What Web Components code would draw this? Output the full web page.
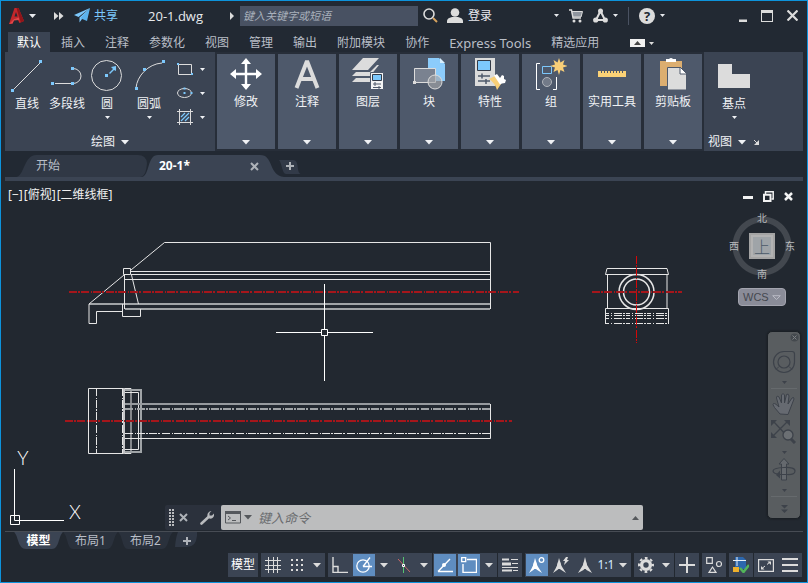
<!DOCTYPE html>
<html lang="zh-CN">
<head>
<meta charset="utf-8">
<title>20-1.dwg</title>
<style>
  html { height: 100%; }
  body {
    margin: 0; min-height: 100%; display: flex; flex-direction: column; overflow: hidden;
    font: 12px/16px "Noto Sans", "Noto Sans CJK SC", sans-serif; color: #e4e6ea;
    background: #222830;
    --bar: #222933; --panel: #3b4453; --tile: #4e596b; --edge: #0d93dc;
    --icon: #dcdcdc; --blue: #7cc8fc; --active: #5f8dc0;
  }
  cad-window { flex: 1; }
</style>
</head>
<body>
<cad-window>
  <title-bar slot="top" file="20-1.dwg"></title-bar>
  <ribbon-tabs slot="top">
    <ribbon-tab active>默认</ribbon-tab>
    <ribbon-tab>插入</ribbon-tab>
    <ribbon-tab>注释</ribbon-tab>
    <ribbon-tab>参数化</ribbon-tab>
    <ribbon-tab>视图</ribbon-tab>
    <ribbon-tab>管理</ribbon-tab>
    <ribbon-tab>输出</ribbon-tab>
    <ribbon-tab>附加模块</ribbon-tab>
    <ribbon-tab>协作</ribbon-tab>
    <ribbon-tab latin>Express Tools</ribbon-tab>
    <ribbon-tab>精选应用</ribbon-tab>
  </ribbon-tabs>
  <ribbon-bar slot="top">
    <draw-panel slot="start"></draw-panel>
    <tool-panel icon="move">修改</tool-panel>
    <tool-panel icon="annotate">注释</tool-panel>
    <tool-panel icon="layers">图层</tool-panel>
    <tool-panel icon="block">块</tool-panel>
    <tool-panel icon="props">特性</tool-panel>
    <tool-panel icon="group">组</tool-panel>
    <tool-panel icon="ruler">实用工具</tool-panel>
    <tool-panel icon="clipboard">剪贴板</tool-panel>
    <view-panel slot="end"></view-panel>
  </ribbon-bar>
  <file-tabs slot="top"></file-tabs>
  <model-space>
    <view-cube slot="cube"></view-cube>
    <nav-bar slot="nav"></nav-bar>
    <command-line slot="command"></command-line>
  </model-space>
  <layout-tabs slot="bottom"></layout-tabs>
  <status-bar slot="bottom"></status-bar>
</cad-window>

<script>
const RESET = `
  :host, *, *::before, *::after { box-sizing: border-box; }
  button, input { font: inherit; color: inherit; background: none; border: 0; padding: 0; margin: 0; }
  button { cursor: pointer; white-space: nowrap; }
  svg { display: block; }
`;
function define(name, html, setup) {
  const tpl = document.createElement('template');
  tpl.innerHTML = html.replace('<style>', '<style>' + RESET);
  customElements.define(name, class extends HTMLElement {
    constructor() {
      super();
      this.attachShadow({ mode: 'open' }).append(tpl.content.cloneNode(true));
    }
    connectedCallback() { if (setup) setup.call(this, this.shadowRoot); }
  });
}
function addIcon(host, where) {
  const name = host.getAttribute('icon');
  const button = host.shadowRoot.querySelector('button');
  if (!name || button.querySelector('.main')) return;
  const icon = document.createElement('ui-icon');
  icon.className = 'main';
  icon.setAttribute('name', name);
  button[where](icon);
}

/* name: [width, height, markup] */
const ICONS = {
  caret: [7, 4, '<path d="M0 0h7L3.5 4z" fill="currentColor"/>'],
  caretS: [5, 3, '<path d="M0 0h5L2.5 3z" fill="currentColor"/>'],
  caretB: [8, 5, '<path d="M0 0h8L4 4.500z" fill="currentColor"/>'],
  up: [7, 4, '<path d="M0 4h7L3.500 0z" fill="currentColor"/>'],
  right: [4, 8, '<path d="M0 0v8l4-4z" fill="#dcdcdc"/>'],
  logo: [15, 16, '<path d="M5.500 0H9.500L15 13L10.500 15L8.200 10.500L5 11L3.600 15.500L0 16z" fill="#c3272b"/><path d="M7 4L5.500 8.500H8.500z" fill="#222933"/><path d="M9.500 0L15 13L11.800 14.400L7.500 0z" fill="#8f1519"/><path d="M0 16L5 11L10 9.500V12L5 12.500L3.600 15.500z" fill="#e0474a"/>'],
  more: [10, 8, '<path d="M0 0v8l4.500-4zM5 0v8l4.500-4z" fill="#dcdcdc"/>'],
  plane: [16, 15, '<path d="M16 0L0 7L4.500 9zM16 0L5.500 9.500V14.500L8 11z" fill="#7cc8fc"/><path d="M16 0L6.500 10.200L13 13z" fill="#5bb3ee"/>'],
  search: [15, 15, '<circle cx="6" cy="6" r="5" fill="none" stroke="#dcdcdc" stroke-width="1.600"/><path d="M10 10l4 4" stroke="#d7a35e" stroke-width="2"/>'],
  user: [16, 15, '<circle cx="8" cy="4.500" r="4.300" fill="#dcdcdc"/><path d="M0 15v-2q0-3 5-4h6q5 1 5 4v2z" fill="#dcdcdc"/>'],
  cart: [14, 14, '<path d="M0 1h2.500L4 9h8" fill="none" stroke="#dcdcdc" stroke-width="1.400"/><path d="M3 2.500h10.500L12 8H4z" fill="#8f959e" stroke="#dcdcdc"/><circle cx="5" cy="12" r="1.500" fill="#dcdcdc"/><circle cx="11" cy="12" r="1.500" fill="#dcdcdc"/>'],
  share: [15, 15, '<path d="M7.500 3L3 12H12z" fill="none" stroke="#dcdcdc" stroke-width="2"/><circle cx="7.500" cy="3" r="2.500" fill="#dcdcdc"/><circle cx="2.700" cy="12" r="2.600" fill="#dcdcdc"/><circle cx="12.300" cy="12" r="2.600" fill="#dcdcdc"/>'],
  min: [8, 12, '<path d="M0 9.500h8v2.500h-8z" fill="#dcdcdc"/>'],
  max: [12, 12, '<path d="M0 0h12v12H0zM1 3v8h10V3z" fill="#dcdcdc" fill-rule="evenodd"/>'],
  close: [11, 11, '<path d="M.5.5l10 10M10.500.5l-10 10" stroke="#dcdcdc" stroke-width="2.200"/>'],
  line: [32, 32, '<path d="M2 30L29 3" stroke="#dcdcdc"/><path d="M0 29h3v3H0zM28 0h3v3h-3z" fill="#7cc8fc"/>'],
  pline: [32, 32, '<path d="M4 23.500h16M22 8.500a8 7.500 0 0 1 0 15" fill="none" stroke="#dcdcdc"/><path d="M0 22h3v3H0zM20 22h3v3h-3zM20 7h3v3h-3z" fill="#7cc8fc"/>'],
  circle: [32, 32, '<circle cx="15.500" cy="15.500" r="15" fill="none" stroke="#dcdcdc"/><path d="M14 14h3v3h-3zM25 6v5l-2-1-4 4-1-1 4-4-2-2z" fill="#7cc8fc"/>'],
  arc: [32, 32, '<path d="M3 28C4 16 15 4 29 3" fill="none" stroke="#dcdcdc"/><path d="M2 27h3v3H2zM10 8h3v3h-3zM29 0h3v3h-3z" fill="#7cc8fc"/>'],
  rect: [16, 16, '<path d="M1.500 3.500h13v10h-13z" fill="none" stroke="#dcdcdc"/><path d="M0 2h2v2H0zM14 12h2v2h-2z" fill="#7cc8fc"/>'],
  ellipse: [16, 16, '<ellipse cx="7.500" cy="8" rx="7" ry="4.500" fill="none" stroke="#dcdcdc"/><path d="M6.500 2.500h2v2h-2zM6.500 7h2v2h-2zM13.500 7h2v2h-2z" fill="#7cc8fc"/>'],
  hatch: [16, 16, '<path d="M0 2.500h16M0 13.500h16M2.500 0v16M13.500 0v16" stroke="#dcdcdc"/><path d="M4 8l4-4M4 12l8-8M8 12l4-4" stroke="#7cc8fc" stroke-width="1.200"/>'],
  move: [32, 32, '<path d="M16 0l5 6h-3.800v8.800H26V11l6 5-6 5v-3.800h-8.800V26H21l-5 6-5-6h3.800v-8.800H6V21l-6-5 6-5v3.800h8.800V6H11z" fill="#fff"/>'],
  annotate: [32, 32, '<path d="M5.500 30L16 3L26.500 30M9 21H23" fill="none" stroke="#dcdcdc" stroke-width="4" stroke-linejoin="bevel"/>'],
  layers: [32, 32, '<path d="M11 0h16L16 12H0zM4 14h14l7-7h2l-9 11H0zM4 20h14l3-3v4l-3 3H0z" fill="#dcdcdc"/><path d="M18.500 14.500h13v17h-13z" fill="#f4f4f4" stroke="#4e596b"/><path d="M20.500 16.500h9v6h-9z" fill="#7cc8fc" stroke="#333b48"/><path d="M21 26h8M23 24v4M21 29.500h8M27 28v3" stroke="#4e596b"/>'],
  block: [32, 32, '<path d="M15 0h11l6 6v17H15z" fill="#8cccfb"/><path d="M27 0v5h5z" fill="#d8effd"/><path d="M1.500 10.500h21v14h-21z" fill="#7a8290" stroke="#dcdcdc"/><path d="M0 23h3v3H0z" fill="#dcdcdc"/><circle cx="22" cy="24" r="7" fill="#a6a8ab" fill-opacity=".65" stroke="#dcdcdc"/>'],
  props: [32, 32, '<path d="M1 0h20v28H1z" fill="#dcdcdc"/><path d="M3.500 2.500h13v10h-13z" fill="#7cc8fc" stroke="#333b48"/><path d="M4 18h12M8 15.500v5M4 23h12M12 21v5" stroke="#4e596b" stroke-width="1.500"/><path d="M15 21l6-3 6 8-4 6q-2-7-8-11z" fill="#f8cf78"/><path d="M20 17.500l3-1.500 3 4 2-3 2 1v3l2 1-1 3-3 .5-2 1z" fill="#fff"/>'],
  group: [32, 32, '<path d="M5 5.500H1.500v26H5M18 31.500h3.500V19" fill="none" stroke="#fff"/><path d="M7.500 8.500h9v7h-9z" fill="none" stroke="#7cc8fc"/><circle cx="12" cy="24" r="4.500" fill="#727a88" stroke="#b0b4ba"/><path d="M24 0l1.500 4.500 4-2.500-1.500 4.500 5 1.500-5 1.500 1.500 4.500-4-2-1.500 5-1.500-5-4 2 1.500-4.500-5-1.500 5-1.500-1.500-4.500 4 2.500z" fill="#f8cf78"/>'],
  ruler: [32, 32, '<path d="M2 13h28v6H2z" fill="#fbd276"/><path d="M5.500 12v3M8.500 12v3M11.500 12v3M14.500 12v3M17.500 12v3M20.500 12v3M23.500 12v3M26.500 12v3" stroke="#4e596b"/>'],
  clipboard: [32, 32, '<path d="M3 3h22v25H3z" fill="#dcae70"/><path d="M9 1h3q2-2 4 0h3v3H9z" fill="#fff"/><path d="M10.500 9.500h13l6 6V32h-19z" fill="#dcdcdc" stroke="#4e596b"/><path d="M23 9v7h7z" fill="#fff" stroke="#4e596b"/>'],
  base: [32, 24, '<path d="M0 0h14v10h18v14H0z" fill="#dcdcdc"/>'],
  launch: [5, 5, '<path d="M0 0l3 3" stroke="#dcdcdc"/><path d="M5 0v5H0z" fill="#dcdcdc"/>'],
  x: [9, 9, '<path d="M1 1l7 7M8 1l-7 7" stroke="#aeb2b8" stroke-width="2"/>'],
  plus: [8, 8, '<path d="M0 4h8M4 0v8" stroke="#aeb2b8" stroke-width="2"/>'],
  docmin: [10, 10, '<path d="M0 4h10v3H0z" fill="#f2f2f2"/>'],
  docmax: [11, 11, '<path d="M2.500 3V.8H10.200V8H8.500" fill="none" stroke="#f2f2f2" stroke-width="1.500"/><path d="M1 3.800h6.500V10H1z" fill="none" stroke="#f2f2f2" stroke-width="2"/>'],
  docx: [9, 9, '<path d="M1 1l7 7M8 1l-7 7" stroke="#f2f2f2" stroke-width="2.500"/>'],
  grip: [5, 18, '<path d="M1 0v18M4 0v18" stroke="#b9bbbe" stroke-width="2" stroke-dasharray="2 1"/>'],
  wrench: [14, 14, '<path d="M1.500 12.500L8.500 6" stroke="#b9bbbe" stroke-width="2.600" stroke-linecap="round"/><path d="M11.500 0L9.500 2v2.500H12L14 2.500q.5 3-1.500 4.500t-4 0Q6.500 5 8 2 9.500 0 11.500 0z" fill="#b9bbbe"/>'],
  prompt: [16, 13, '<path d="M.5.5h15v11.500H.5z" fill="none" stroke="#55585c"/><path d="M0 0h16v3H0z" fill="#55585c"/><path d="M3 5l2.500 2L3 9M7 9.500h4" fill="none" stroke="#55585c"/>'],
  grid: [16, 16, '<path d="M3.500 0v16M8.500 0v16M12.500 0v16M0 3.500h16M0 8.500h16M0 12.500h16" stroke="#dcdcdc"/>'],
  snap: [14, 14, '<path d="M1 2h12M1 7h12M1 12h12" stroke="#dcdcdc" stroke-width="2" stroke-dasharray="2 3"/>'],
  ortho: [16, 16, '<path d="M1 0v15.500h15M1 9.500h5v6" fill="none" stroke="#dcdcdc" stroke-width="1.400"/>'],
  polar: [16, 16, '<circle cx="7" cy="9" r="6.200" fill="none" stroke="#fff" stroke-width="1.300"/><path d="M7 9.500h9M7 9.500l7-9" stroke="#fff" stroke-width="1.300"/>'],
  iso: [16, 16, '<path d="M2 2l12 13" stroke="#c96868"/><path d="M7.500 0v16" stroke="#56c271"/><path d="M6.500 7.500h2v2h-2z" fill="#3b4453" stroke="#fff"/>'],
  angle: [16, 16, '<path d="M1 14.500h15M1 14.500L13 2" stroke="#fff" stroke-width="1.400"/><circle cx="7" cy="8" r="2" fill="#fff"/>'],
  osnap: [16, 16, '<path d="M6 2.500h9.500v13H2V7" fill="none" stroke="#fff" stroke-width="1.400"/><path d="M.7.7h4v4h-4z" fill="none" stroke="#fff" stroke-width="1.300"/>'],
  weight: [16, 14, '<path d="M0 .5h7v2H0zM9 1h7v1H9zM0 4.500h9v3H0zM10 5h6v1h-6zM0 9h16v1H0zM0 11.500h10v2H0zM11 12h5v1h-5z" fill="#dcdcdc"/>'],
  annoA: [16, 16, '<path d="M6 1L8.500 9 13 16 7.500 12.500 6 9.500 5 12.500 0 16 4 9z" fill="#fff"/><path d="M5 5h2l2 7H3z" fill="#fff"/><circle cx="12.500" cy="3" r="2.300" fill="none" stroke="#fff" stroke-width="1.300"/>'],
  annoB: [16, 16, '<path d="M6 1L8.500 9 13 16 7.500 12.500 6 11 5 12.500 0 16 4 9z" fill="#dcdcdc"/><path d="M5 5h2l2 7H3z" fill="#dcdcdc"/><path d="M13 0l-3 4h2l-1 4 5-5h-2l1-3z" fill="#dcdcdc"/>'],
  annoC: [16, 16, '<path d="M8 0L10 8 15 16 9.500 13 8 11 6.500 13 1 16 6 8z" fill="#dcdcdc"/><path d="M7 5h2l2 7H5z" fill="#dcdcdc"/>'],
  gear: [16, 16, '<circle cx="8" cy="8" r="4.400" fill="none" stroke="#dcdcdc" stroke-width="3.400"/><circle cx="8" cy="8" r="7" fill="none" stroke="#dcdcdc" stroke-width="2" stroke-dasharray="2.750 2.750" stroke-dashoffset="1.400"/>'],
  add: [16, 16, '<path d="M0 8h16M8 0v16" stroke="#dcdcdc" stroke-width="2"/>'],
  shapes: [16, 16, '<path d="M.7.7h5.600v5.600H.7zM3 15.300h7L6.500 10z" fill="none" stroke="#dcdcdc" stroke-width="1.200"/><circle cx="13" cy="7" r="2.500" fill="none" stroke="#dcdcdc" stroke-width="1.200"/>'],
  perf: [16, 16, '<path d="M2 0h8l3 3v9H2z" fill="#2c67ad"/><path d="M0 3.500h13M4 0v9" stroke="#e8eef5"/><path d="M0 10h6v5H0z" fill="#eeb02c"/><path d="M7 11l3.500 4 5.500-7" fill="none" stroke="#52b45a" stroke-width="2.500"/>'],
  full: [16, 13, '<path d="M.6.6h14.800v11.800H.6z" fill="none" stroke="#dcdcdc" stroke-width="1.200"/><path d="M9 5.500L12 3M4 9.500L7 7" stroke="#dcdcdc"/><path d="M9.500 2.500H13V6zM3 7v3.500h3.500z" fill="#dcdcdc"/>'],
  menu: [16, 14, '<path d="M0 1h16M0 7h16M0 13h16" stroke="#dcdcdc" stroke-width="2"/>'],
  wheel: [24, 24, '<path d="M12 1.500H20Q22.500 1.500 22.500 4V12A10.500 10.500 0 1 1 12 1.500z" fill="none" stroke="#3d424a" stroke-width="1.200"/><circle cx="12" cy="12" r="6" fill="none" stroke="#3d424a" stroke-width="1.200"/><path d="M7 16.500l-3 3M17 16.500l3 3" stroke="#3d424a"/>'],
  hand: [24, 24, '<path d="M8 22L2.500 15.500Q0 12 1.500 11.500T7 15L4.500 6Q4.500 3 7 5l2.500 6L9.500 3Q11 0 12.500 3v8l2-8.500Q16.500 1 17 4l-1 8 4-6q2-1.500 2 1l-3.500 9L16 22.500z" fill="#666a71" stroke="#3d424a"/>'],
  zoom: [26, 24, '<path d="M3 2L16 16M16 2L2 16" stroke="#3d424a" stroke-width="1.300"/><path d="M0 0h6L0 6zM13 0h6v6zM0 18v-6l6 6z" fill="#3d424a"/><circle cx="17" cy="15" r="5" fill="#6b6f73" stroke="#3d424a" stroke-width="1.300"/><path d="M20 19l4 4" stroke="#3d424a" stroke-width="3"/>'],
  orbit: [24, 24, '<path d="M9.500 22V6H7L12 .5 17 6h-2.500V22z" fill="#65696e" stroke="#3d424a"/><path d="M9 16.500Q1 16 1 13t11-3.500T23 13t-8 3.500H6" fill="none" stroke="#3d424a" stroke-width="1.200"/><path d="M8 12.500v8L4 17z" fill="#3d424a"/>'],
  expand: [7, 8, '<path d="M0 0h7L3.500 3.500zM0 4.500h7L3.500 8z" fill="#3d424a"/>'],
  navx: [9, 9, '<circle cx="4.500" cy="4.500" r="4" fill="#44494e"/><path d="M2.500 2.500l4 4M6.500 2.500l-4 4" stroke="#7c8084"/>'],
  wcs: [9, 5, '<path d="M.7.7h7.600L4.500 4.500z" fill="none" stroke="#b9bac4"/>']
};
define('ui-icon', '<style>:host{display:inline-flex;flex:none}</style><div></div>', function (root) {
  const [w, h, markup] = ICONS[this.getAttribute('name')];
  root.querySelector('div').innerHTML = `<svg width="${w}" height="${h}" viewBox="0 0 ${w} ${h}" aria-hidden="true">${markup}</svg>`;
});

define('cad-window', `<style>
  :host { display: flex; flex-direction: column; border: 1px solid var(--edge); background: #222830; min-width: 0; }
  main { flex: 1; display: flex; flex-direction: column; min-height: 0; }
</style>
<slot name="top"></slot><main><slot></slot></main><slot name="bottom"></slot>`);

define('title-bar', `<style>
  :host { display: flex; align-items: center; height: 29px; background: var(--bar); padding: 0 9px 0 8px; color: #e8eaee; }
  button { display: flex; align-items: center; gap: 5px; flex: none; }
  .app { margin-right: 18px; }
  .quick { margin-right: 10px; }
  .share { color: var(--blue); margin-right: 30px; gap: 4px; }
  .name { flex: none; width: 82px; font: 13px/16px "Open Sans", sans-serif; white-space: nowrap; }
  input { width: 178px; min-width: 60px; height: 20px; margin: 0 5px 0 6px; padding: 0 3px; background: #485162; font-style: italic; font-size: 11px; outline: 0; }
  input::placeholder { color: #a9b0bb; opacity: 1; }
  .find { margin-right: 9px; }
  .spacer { flex: 1; }
  .group { display: flex; align-items: center; gap: 10px; margin-right: 74px; }
  hr { width: 1px; height: 18px; margin: 0; border: 0; background: #4a5262; }
  .help b { width: 16px; height: 16px; border-radius: 8px; background: #dcdcdc; color: #222933; font: bold 13px/16px "Open Sans", sans-serif; }
  .win { display: flex; align-items: center; gap: 14px; }
</style>
<button class="app" aria-label="应用程序菜单"><ui-icon name="logo"></ui-icon><ui-icon name="caret"></ui-icon></button>
<button class="quick" aria-label="快速访问"><ui-icon name="more"></ui-icon></button>
<button class="share"><ui-icon name="plane"></ui-icon>共享</button>
<span class="name"></span>
<ui-icon name="right"></ui-icon>
<input type="search" placeholder="键入关键字或短语" aria-label="搜索">
<button class="find" aria-label="搜索"><ui-icon name="search"></ui-icon></button>
<button><ui-icon name="user"></ui-icon>登录</button>
<span class="spacer"></span>
<div class="group">
  <button aria-label="登录选项"><ui-icon name="caretS"></ui-icon></button>
  <button aria-label="应用商店"><ui-icon name="cart"></ui-icon></button>
  <button aria-label="连接"><ui-icon name="share"></ui-icon><ui-icon name="caretS"></ui-icon></button>
  <hr>
  <button class="help" aria-label="帮助"><b>?</b><ui-icon name="caretS"></ui-icon></button>
</div>
<div class="win">
  <button aria-label="最小化"><ui-icon name="min"></ui-icon></button>
  <button aria-label="最大化"><ui-icon name="max"></ui-icon></button>
  <button aria-label="关闭"><ui-icon name="close"></ui-icon></button>
</div>`, function (root) { root.querySelector('.name').textContent = this.getAttribute('file'); });

define('ribbon-tab', `<style>
  :host { display: flex; }
  button { padding: 2px 9px 0; color: #b9bec7; height: 20px; }
  :host([active]) button { background: var(--panel); color: #fff; }
  :host([latin]) button { font-size: 13px; }
</style><button role="tab"><slot></slot></button>`);

define('ribbon-tabs', `<style>
  :host { display: flex; align-items: flex-end; gap: 2px; height: 22px; padding: 0 7px; background: var(--bar); color: #dcdcdc; }
  .fold { display: flex; align-items: center; gap: 4px; height: 18px; margin-left: 20px; }
  .box { display: flex; align-items: center; justify-content: center; width: 15px; height: 8px; background: #f0f0f0; color: #444; }
</style><slot></slot>
<button class="fold" aria-label="最小化功能区"><span class="box"><ui-icon name="up"></ui-icon></span><ui-icon name="caretS"></ui-icon></button>`);

define('ribbon-bar', `<style>
  :host { display: flex; margin: 0 4px; background: var(--panel); height: 99px; }
  .tiles { flex: 0 1 489px; display: flex; gap: 3px; padding: 2px; background: #272e39; min-width: 0; }
</style><slot name="start"></slot><div class="tiles"><slot></slot></div><slot name="end"></slot>`);

define('tool-panel', `<style>
  :host { display: flex; flex: 1 1 58px; background: var(--tile); }
  button { flex: 1; display: flex; flex-direction: column; align-items: center; padding: 4px 0; color: #f0f2f5; }
  .label { margin: 4px 0 auto; }
</style><button><span class="label"><slot></slot></span><ui-icon name="caretB"></ui-icon></button>`, function () { addIcon(this, 'prepend'); });

define('draw-panel', `<style>
  :host { display: flex; flex-direction: column; flex: 0 0 210px; padding: 8px 6px 1px; color: #f0f2f5; }
  .tools { display: grid; grid-template-columns: 32px 36px 32px 40px 34px; gap: 6px; }
  .tools > button { display: flex; flex-direction: column; align-items: center; gap: 4px; }
  .small { display: grid; gap: 8px; align-content: start; padding-top: 1px; }
  .small button { display: flex; align-items: center; justify-content: space-between; padding: 0 4px 0 2px; }
  .foot { display: flex; align-items: center; justify-content: center; gap: 6px; margin-top: auto; }
</style>
<div class="tools">
  <button><ui-icon name="line"></ui-icon><span>直线</span></button>
  <button><ui-icon name="pline"></ui-icon><span>多段线</span></button>
  <button><ui-icon name="circle"></ui-icon><span>圆</span><ui-icon name="caretS"></ui-icon></button>
  <button><ui-icon name="arc"></ui-icon><span>圆弧</span><ui-icon name="caretS"></ui-icon></button>
  <div class="small">
    <button aria-label="矩形"><ui-icon name="rect"></ui-icon><ui-icon name="caretS"></ui-icon></button>
    <button aria-label="椭圆"><ui-icon name="ellipse"></ui-icon><ui-icon name="caretS"></ui-icon></button>
    <button aria-label="图案填充"><ui-icon name="hatch"></ui-icon><ui-icon name="caretS"></ui-icon></button>
  </div>
</div>
<button class="foot">绘图<ui-icon name="caretB"></ui-icon></button>`);

define('view-panel', `<style>
  :host { display: flex; flex-direction: column; flex: 1; padding: 12px 4px 1px; color: #f0f2f5; }
  .base { display: flex; flex-direction: column; align-items: center; gap: 4px; width: 52px; }
  .base span { margin-top: 4px; }
  .foot { display: flex; align-items: center; gap: 6px; margin-top: auto; }
  .foot ui-icon + ui-icon { margin-left: 2px; }
</style>
<button class="base"><ui-icon name="base"></ui-icon><span>基点</span><ui-icon name="caretS"></ui-icon></button>
<button class="foot">视图<ui-icon name="caretB"></ui-icon><ui-icon name="launch"></ui-icon></button>`);

define('file-tabs', `<style>
  :host { display: flex; align-items: stretch; height: 30px; padding: 4px 0 0 11px; background: linear-gradient(var(--panel), var(--panel)) 0 100% / 100% 4px no-repeat, var(--bar); margin: 0 4px; }
  .tab { position: relative; isolation: isolate; display: flex; align-items: center; height: 22px; }
  .tab > svg { position: absolute; inset: 0; width: 100%; height: 100%; z-index: -1; }
  .start { width: 132px; padding-left: 20px; color: #b9bec7; }
  .doc { width: 138px; padding: 0 27px 0 11px; justify-content: space-between; font-weight: bold; color: #fff; }
  .new { width: 23px; justify-content: center; margin-left: -8px; }
  .doc button { display: flex; }
</style>
<div class="tab start"><svg viewBox="0 0 132 22" preserveAspectRatio="none"><path d="M0 22C8 22 8 0 20 0H122Q130 0 131 8Q130 22 124 22z" fill="#303845"/></svg><button>开始</button></div>
<div class="tab doc"><svg viewBox="0 0 138 22" preserveAspectRatio="none" overflow="visible"><path d="M-6 22C2 20 -1 0 10 0H112C126 0 120 20 136 22z" fill="#3b4453"/></svg><button>20-1*</button><button aria-label="关闭"><ui-icon name="x"></ui-icon></button></div>
<button class="tab new" aria-label="新建"><svg viewBox="0 0 23 22" preserveAspectRatio="none"><path d="M1 5H15C22 5 18 18 23 19H8C4 19 4 8 1 5z" fill="#323a48"/></svg><ui-icon name="plus"></ui-icon></button>`);

define('model-space', `<style>
  :host { position: relative; display: block; flex: 1; min-height: 350px; overflow: hidden; background: #222830; }
  .sheet { position: absolute; inset: 0; width: 100%; height: 100%; }
  .label { position: absolute; left: 7px; top: 6px; display: flex; gap: 1px; color: #f0f0f0; }
  .win { position: absolute; right: 14px; top: 10px; display: flex; align-items: center; gap: 10px; }
  .win button { display: flex; }
  ::slotted([slot=cube]) { position: absolute; right: 11px; top: 31px; }
  ::slotted([slot=nav]) { position: absolute; right: 6px; top: 150px; }
  ::slotted([slot=command]) { position: absolute; left: 164px; right: 164px; bottom: 1px; }
</style>
<svg class="sheet" viewBox="1 181 806 350" preserveAspectRatio="xMinYMin" fill="none" stroke="#e6e6e6" role="img" aria-label="图形">
  <g id="side">
    <path d="M131 270L164.500 242.500H490.500V309"/>
    <path d="M131 271.500H490M131 274.500H490M125 279.500H490"/>
    <path d="M89 304H490M125 309H490" stroke="#a0a4a7" stroke-width="2"/>
    <path d="M123.500 268.500h7v6h-7zM124.500 275V309M131.500 275L138.500 304M124 275L89 304V323.500H96.500V311.500H122.500M122.500 304V316.500H140.500V309"/>
  </g>
  <g id="plan">
    <path d="M88.500 388.500H131V453.500H88.500z"/>
    <path d="M124 390H141V452H124" stroke="#a0a4a7" stroke-width="2"/>
    <path d="M125 392.500H138.500V449.500H125"/>
    <path d="M124 388V454" stroke="#c4c5c7" stroke-width="2"/>
    <path d="M96.500 388V454M122.500 388V454" stroke-dasharray="8 2 1 1 8 1 2 1 8 1 2 2"/>
    <path d="M125 404H490" stroke="#969a9e" stroke-width="2"/>
    <path d="M490.500 404V438.500H125"/>
    <path d="M125 409H490" stroke="#a0a4a7" stroke-width="2" stroke-dasharray="8 2 1 1 8 1 2 1 8 1 2 2"/>
    <path d="M125 433.500H490" stroke-dasharray="8 2 1 1 8 1 2 1 8 1 2 2"/>
  </g>
  <g id="front">
    <path d="M607 268.500H667L668.500 274.500H605.500zM607.500 274.500V308.500M667 274.500V308.500M605.500 324V308.500H668.500V324"/>
    <circle cx="636.500" cy="292" r="17.500" stroke-width="1.500"/><circle cx="636.500" cy="292" r="13" stroke-width="1.500"/>
    <path d="M605 313.500H669M605 315.500H669M605 318.500H669M605 323.500H669" stroke-dasharray="4 2 1 2 8 1 2 1"/>
  </g>
  <g id="axes" stroke="#a5161b" stroke-width="2" stroke-dasharray="8 1 2 1 8 2 1 1 8 1 2 2">
    <path d="M69 292H519M65 421H512M592 292H682"/>
    <path d="M636.500 256V343" stroke="#d40808" stroke-width="1"/>
  </g>
  <path id="cursor" d="M324.500 284V329M324.500 336V381M276 332.500H321M328 332.500H373M321.500 329.500h6v6h-6z" stroke="#fff"/>
  <g id="ucs">
    <path d="M14.500 469V520.500H64M10.500 515.500h9v9h-9z" stroke="#fff"/>
    <g fill="#fff" stroke="none" font-family="Lato, sans-serif" font-weight="300" font-size="19" text-anchor="middle">
      <text x="23" y="465">Y</text><text x="75" y="519">X</text>
    </g>
  </g>
</svg>
<div class="label"><button>[−]</button><button>[俯视]</button><button>[二维线框]</button></div>
<div class="win">
  <button aria-label="最小化视图"><ui-icon name="docmin"></ui-icon></button>
  <button aria-label="还原视图"><ui-icon name="docmax"></ui-icon></button>
  <button aria-label="关闭视图"><ui-icon name="docx"></ui-icon></button>
</div>
<slot name="cube"></slot><slot name="nav"></slot><slot name="command"></slot>`);

define('view-cube', `<style>
  :host { display: flex; flex-direction: column; align-items: center; gap: 4px; width: 68px; }
  .ring { display: grid; grid-template: 12px 44px 12px / 12px 44px 12px; place-items: center; font: 10px/12px "Noto Sans CJK SC", sans-serif; color: #b8babd;
    background: radial-gradient(circle, transparent 23px, #43484f 24px, #43484f 29px, transparent 30px); }
  .n, .s { grid-column: 2; } .w { grid-column: 1; } .e { grid-column: 3; }
  .top { width: 26px; height: 26px; border: 2px solid #a4a4a4; background: #9fa4a8; color: #4c5a68; font: 300 16px/20px "Noto Sans CJK SC", sans-serif; grid-column: 2; grid-row: 2; box-shadow: inset 0 0 0 2px #b2b2b2; }
  .w, .e { grid-row: 2; }
  .wcs { display: flex; align-items: center; justify-content: space-between; width: 48px; height: 18px; margin-top: 4px; padding: 0 4px; border: 1px solid #a3a4ae; border-radius: 4px; background: #8a8c98; color: #45484f; font: 11px/16px "Liberation Sans", sans-serif; }
</style>
<div class="ring"><button class="n">北</button><button class="w">西</button><button class="top">上</button><button class="e">东</button><button class="s">南</button></div>
<button class="wcs">WCS<ui-icon name="wcs"></ui-icon></button>`);

define('nav-bar', `<style>
  :host { display: flex; flex-direction: column; align-items: center; width: 34px; height: 188px; border: 1px solid #1b2026; border-radius: 5px; background: #595d60; color: #3d424a; padding: 1px 0 5px; box-shadow: 0 0 2px #14181d; }
  button { display: flex; flex-direction: column; align-items: center; gap: 7px; }
  .x { align-self: flex-end; margin: 0 1px 8px 0; }
  hr { width: 26px; height: 1px; margin: 4px 0 3px; border: 0; background: #666a6d; flex: none; }
  .gap { margin-top: 4px; } .last { margin-top: auto; }
</style>
<button class="x" aria-label="关闭导航栏"><ui-icon name="navx"></ui-icon></button>
<button aria-label="导航控制盘"><ui-icon name="wheel"></ui-icon><ui-icon name="caretS"></ui-icon></button>
<hr>
<button aria-label="平移"><ui-icon name="hand"></ui-icon></button>
<button class="gap" aria-label="缩放"><ui-icon name="zoom"></ui-icon><ui-icon name="caretS"></ui-icon></button>
<button class="gap" aria-label="动态观察"><ui-icon name="orbit"></ui-icon><ui-icon name="caretS"></ui-icon></button>
<hr>
<button class="last" aria-label="更多"><ui-icon name="expand"></ui-icon></button>`);

define('command-line', `<style>
  :host { display: flex; align-items: center; height: 25px; background: #2b313c; border-radius: 2px; padding-left: 4px; }
  button { display: flex; align-items: center; gap: 3px; }
  .x { margin: 0 12px 0 5px; }
  .field { flex: 1; align-self: stretch; display: flex; align-items: center; gap: 6px; margin-left: 7px; padding: 0 4px; background: #bcbdbe; border-radius: 2px; color: #55585c; min-width: 0; }
  input { flex: 1; min-width: 0; font-size: 13px; font-style: italic; outline: 0; }
  input::placeholder { color: #6a6c6f; opacity: 1; }
</style>
<ui-icon name="grip"></ui-icon>
<button class="x" aria-label="关闭命令行"><ui-icon name="x"></ui-icon></button>
<button aria-label="自定义"><ui-icon name="wrench"></ui-icon></button>
<div class="field">
  <button aria-label="近期命令"><ui-icon name="prompt"></ui-icon><ui-icon name="caretB"></ui-icon></button>
  <input type="text" placeholder="键入命令" aria-label="命令">
  <button aria-label="命令历史"><ui-icon name="up"></ui-icon></button>
</div>`);

define('layout-tabs', `<style>
  :host { display: flex; height: 19px; margin: 0 4px; padding-left: 9px; border-top: 1px solid #474c54; }
  button { position: relative; isolation: isolate; display: flex; align-items: center; justify-content: center; width: 55px; height: 17px; color: #b9bec7; }
  .m { width: 49px; font-weight: bold; color: #fff; }
  .new { width: 27px; }
  svg { position: absolute; inset: 0; width: 100%; height: 100%; z-index: -1; }
</style>
<button class="m"><svg viewBox="0 0 53 17" preserveAspectRatio="none"><path d="M0 0H53C48 4 49 17 41 17H13C4 17 5 4 0 0z" fill="#3b4453"/></svg>模型</button>
<button><svg viewBox="0 0 55 17" preserveAspectRatio="none"><path d="M0 0H55C50 4 51 17 44 17H10C4 17 5 4 0 0z" fill="#2a313c"/></svg>布局1</button>
<button><svg viewBox="0 0 55 17" preserveAspectRatio="none"><path d="M0 0H55C50 4 51 17 44 17H10C4 17 5 4 0 0z" fill="#2a313c"/></svg>布局2</button>
<button class="new" aria-label="新建布局"><svg viewBox="0 0 27 17" preserveAspectRatio="none"><path d="M5 0H24V4Q23 15 14 15H2Q3 4 5 0z" fill="#303845"/></svg><ui-icon name="plus"></ui-icon></button>`);

define('status-button', `<style>
  :host { display: flex; }
  button { display: flex; align-items: center; justify-content: center; width: 24px; height: 24px; color: var(--icon); }
  :host([active]) button { background: var(--active); background-clip: padding-box; border: 1px solid transparent; }
  :host([icon=caretB]) button { width: 16px; }
  :host([text]) button { width: auto; padding: 0 3px; color: #fff; }
  :host([scale]) button { width: 18px; padding: 0; color: #d6ecff; }
</style><button><slot></slot></button>`, function (root) {
  addIcon(this, 'append');
  if (this.title) root.querySelector('button').setAttribute('aria-label', this.title);
});

define('status-bar', `<style>
  :host { display: flex; justify-content: flex-end; gap: 3px; height: 32px; padding: 3px 5px 0; }
  div, section { display: flex; }
  div { gap: 1px; }
  section { height: 24px; background: var(--panel); }
</style>
<section><status-button text>模型</status-button></section>
<section><status-button icon="grid" title="栅格"></status-button><status-button icon="snap" title="捕捉"></status-button><status-button icon="caretB" title="捕捉设置"></status-button></section>
<div>
  <section><status-button icon="ortho" title="正交"></status-button><status-button active icon="polar" title="极轴追踪"></status-button><status-button icon="caretB" title="极轴设置"></status-button><status-button icon="iso" title="等轴测"></status-button><status-button icon="caretB" title="等轴测设置"></status-button></section>
  <section><status-button active icon="angle" title="对象捕捉追踪"></status-button><status-button active icon="osnap" title="对象捕捉"></status-button><status-button icon="caretB" title="对象捕捉设置"></status-button></section>
  <section><status-button icon="weight" title="线宽"></status-button></section>
</div>
<section><status-button active icon="annoA" title="注释可见性"></status-button><status-button icon="annoB" title="自动缩放"></status-button><status-button icon="annoC" title="注释比例"></status-button><status-button text scale>1:1</status-button><status-button icon="caretB" title="比例列表"></status-button></section>
<div>
  <section><status-button icon="gear" title="切换工作空间"></status-button><status-button icon="caretB" title="工作空间列表"></status-button></section>
  <section><status-button icon="add" title="注释监视器"></status-button></section>
</div>
<section><status-button icon="shapes" title="隔离对象"></status-button></section>
<div>
  <section><status-button icon="perf" title="图形性能"></status-button></section>
  <section><status-button icon="full" title="全屏显示"></status-button><status-button icon="menu" title="自定义"></status-button></section>
</div>`);
</script>
</body>
</html>
